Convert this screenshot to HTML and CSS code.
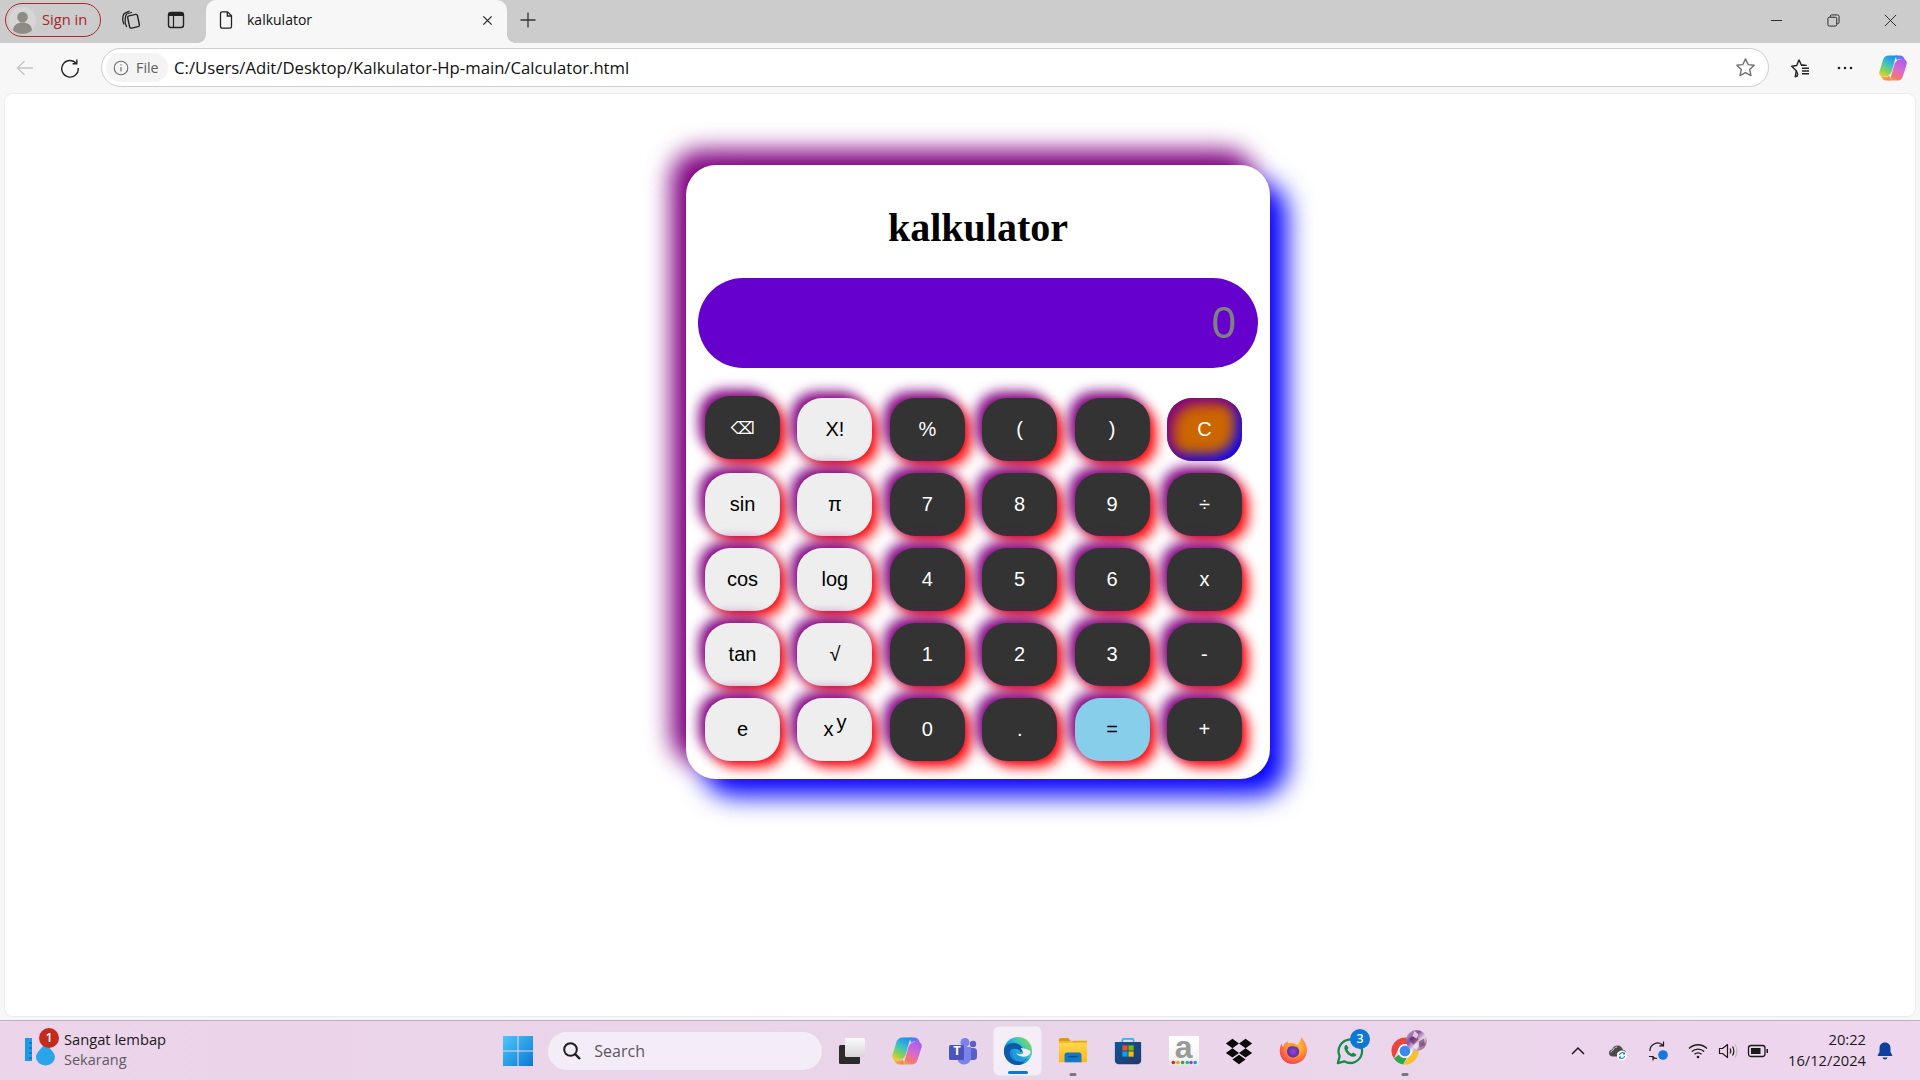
FILE: index.html
```html
<!DOCTYPE html>
<html lang="en">
<head>
<meta charset="utf-8">
<title>kalkulator</title>
<link rel="stylesheet" href="styles.css">
</head>
<body>
<svg class="defs" aria-hidden="true">
  <defs>
    <linearGradient id="copA" x1="0.7" y1="0" x2="0.2" y2="1"><stop offset="0" stop-color="#1e8ff0"/><stop offset=".45" stop-color="#3fc5c0"/><stop offset=".75" stop-color="#8ed24c"/><stop offset="1" stop-color="#f5c93a"/></linearGradient>
    <linearGradient id="copB" x1="0.3" y1="1" x2="0.8" y2="0"><stop offset="0" stop-color="#a85ff0"/><stop offset=".5" stop-color="#e06ac8"/><stop offset=".8" stop-color="#f47a6a"/><stop offset="1" stop-color="#f9a04a"/></linearGradient>
    <linearGradient id="copT" x1="0" y1="0" x2="1" y2="0.500"><stop offset="0" stop-color="#1e8ff0"/><stop offset="1" stop-color="#a85ff0"/></linearGradient>
    <linearGradient id="copU" x1="0" y1="0" x2="1" y2="0.300"><stop offset="0" stop-color="#f5c93a"/><stop offset="1" stop-color="#f9805a"/></linearGradient>
    <linearGradient id="edgeG" x1="0.9" y1="0.15" x2="0.1" y2="0.8"><stop offset="0" stop-color="#7ddc5a"/><stop offset=".35" stop-color="#35c4c8"/><stop offset=".7" stop-color="#1a8fdc"/><stop offset="1" stop-color="#0f6fc0"/></linearGradient>
    <linearGradient id="folderG" x1="0" y1="0" x2="0" y2="1"><stop offset="0" stop-color="#ffd94f"/><stop offset="1" stop-color="#fdb813"/></linearGradient>
    <linearGradient id="storeG" x1="0" y1="0" x2="1" y2="1"><stop offset="0" stop-color="#0f5596"/><stop offset="1" stop-color="#24386c"/></linearGradient>
    <radialGradient id="foxG" cx="0.6" cy="0.35" r="0.75"><stop offset="0" stop-color="#ffd23d"/><stop offset=".5" stop-color="#ff8a2e"/><stop offset="1" stop-color="#f0325f"/></radialGradient>
    <radialGradient id="foxC" cx="0.5" cy="0.5" r="0.5"><stop offset="0" stop-color="#8a4cd8"/><stop offset="1" stop-color="#5b2aa8"/></radialGradient>
    <linearGradient id="winG" x1="0" y1="0" x2="1" y2="1"><stop offset="0" stop-color="#4fc6f8"/><stop offset="1" stop-color="#0a78d4"/></linearGradient>
    <linearGradient id="tvG" x1="0" y1="0" x2="0" y2="1"><stop offset="0" stop-color="#fbfbfb"/><stop offset="1" stop-color="#d8d4d8"/></linearGradient>
    <linearGradient id="mosG" x1="0" y1="0" x2="1" y2="1"><stop offset="0" stop-color="#d8c8dc"/><stop offset=".35" stop-color="#8a4a9a"/><stop offset=".6" stop-color="#e8d8e8"/><stop offset="1" stop-color="#6a2a5c"/></linearGradient>
    <symbol id="copilot" viewBox="0 0 24 24">
      <path fill="url(#copT)" d="M14 1.200h3.800c2.200 0 3.700 1.300 4.200 3.300l.6 2.300-2.800-2c-1.200-.7-3-.6-4.500.5Z"/>
      <path fill="url(#copU)" d="M10 22.800H6.200c-2.200 0-3.700-1.300-4.200-3.300l-.6-2.300 2.800 2c1.200.7 3 .6 4.500-.5Z"/>
      <path fill="url(#copA)" d="M8.500 1.200H16.500C15 1.200 14.300 2.500 13.800 4.500L11.200 14C10.300 17.500 8 19.500 4.800 19.500H3.500C1.200 19.500-.3 17.500.3 15.300L3.500 5C4.300 2.500 6 1.200 8.500 1.200Z"/>
      <path fill="url(#copB)" transform="rotate(180 12 12)" d="M8.500 1.200H16.500C15 1.200 14.300 2.500 13.800 4.500L11.200 14C10.300 17.500 8 19.500 4.800 19.500H3.500C1.200 19.500-.3 17.500.3 15.300L3.500 5C4.300 2.500 6 1.200 8.500 1.200Z"/>
    </symbol>
  </defs>
</svg>

<header class="tabstrip">
  <div class="signin">
    <svg class="avatar" viewBox="0 0 28 28"><circle cx="14" cy="14" r="14" fill="#d6d6d6"/><circle cx="14" cy="10.500" r="5.500" fill="#8e8a86"/><path d="M4 24c1-6 5-8 10-8s9 2 10 8c-5 5-15 5-20 0Z" fill="#8e8a86"/></svg>
    <span>Sign in</span>
  </div>
  <div class="cell first">
    <svg class="ico22" viewBox="0 0 22 22" fill="none" stroke="#222" stroke-width="1.300" stroke-linecap="round"><path d="M3.800 15C2.600 12.500 2.300 9.500 3 7C3.300 5.500 4 4.700 5 4.200L9 2.300"/><path d="M6.500 17.500C5.300 15.500 4.800 12.500 5.200 9.500L5.800 6.500C6 5.500 7 4.800 8 4.500L11.500 3.500"/><rect x="8.500" y="6" width="10" height="12.500" rx="1.600" transform="rotate(-12 13.500 12)" stroke-width="1.400"/></svg>
  </div>
  <div class="cell">
    <svg class="ico20" viewBox="0 0 20 20"><rect x="2.500" y="2.500" width="15" height="15" rx="2.500" fill="none" stroke="#222" stroke-width="1.400"/><path d="M3 3h14v3H3z" fill="#222"/><path d="M7.500 6v11" stroke="#222" stroke-width="1.200"/></svg>
  </div>
  <div class="tab">
    <svg class="ico20 doc" viewBox="0 0 20 20" fill="none" stroke="#222" stroke-width="1.300"><path d="M4.500 3.500c0-1 .7-1.700 1.700-1.700h5.300l4 4v10.700c0 1-.7 1.700-1.700 1.700H6.200c-1 0-1.700-.7-1.700-1.700Z"/><path d="M11.300 2v4h4"/></svg>
    <span class="tab-title">kalkulator</span>
    <svg class="tab-x" viewBox="0 0 12 12" stroke="#222" stroke-width="1.300"><path d="M1.500 1.500l9 9M10.500 1.500l-9 9"/></svg>
  </div>
  <div class="cell newtab">
    <svg class="ico20" viewBox="0 0 20 20" stroke="#333" stroke-width="1.300"><path d="M10 2.500v15M2.500 10h15"/></svg>
  </div>
  <div class="winctl">
    <div class="wbtn"><svg class="ico13" viewBox="0 0 14 14" stroke="#222" stroke-width="1"><path d="M1 7h12"/></svg></div>
    <div class="wbtn"><svg class="ico13" viewBox="0 0 14 14" fill="none" stroke="#222" stroke-width="1"><rect x="1" y="3.500" width="9.500" height="9.500" rx="1.500"/><path d="M3.500 3.500V2.500c0-.8.6-1.500 1.500-1.500h6.500c.8 0 1.500.7 1.500 1.500V9c0 .9-.7 1.500-1.500 1.500h-1"/></svg></div>
    <div class="wbtn"><svg class="ico13" viewBox="0 0 14 14" stroke="#222" stroke-width="1"><path d="M1 1l12 12M13 1L1 13"/></svg></div>
  </div>
</header>

<nav class="toolbar">
  <div class="cell">
    <svg class="ico20" viewBox="0 0 20 20" fill="none" stroke="#c4c4c4" stroke-width="1.300"><path d="M18 10H2.500M9.500 3l-7 7 7 7"/></svg>
  </div>
  <div class="cell">
    <svg class="ico20" viewBox="0 0 20 20" fill="none" stroke="#222" stroke-width="1.400"><path d="M16.200 5.200A8.300 8.300 0 1 0 18.300 10"/><path d="M16.800 1.500v4.200h-4.200"/></svg>
  </div>
  <div class="addr">
    <div class="file-chip">
      <svg class="ico16" viewBox="0 0 16 16" fill="none" stroke="#6b6b6b" stroke-width="1.100"><circle cx="8" cy="8" r="6.800"/><path d="M8 7v4.500M8 4.300v1.200"/></svg>
      <span>File</span>
    </div>
    <span class="url">C:/Users/Adit/Desktop/Kalkulator-Hp-main/Calculator.html</span>
    <svg class="star" viewBox="0 0 20 20" fill="none" stroke="#6e6e6e" stroke-width="1.300" stroke-linejoin="round"><path d="M10 1.800l2.500 5.400 5.800.7-4.300 4 1.200 5.800L10 14.800l-5.200 2.900L6 11.900l-4.300-4 5.800-.7Z"/></svg>
  </div>
  <div class="cell">
    <svg class="ico20" viewBox="0 0 20 20" fill="none" stroke="#222" stroke-width="1.400" stroke-linejoin="round"><path d="M9 1.800l2.200 5 5 .6H11M8 17.500l-2.800 1.300 1.100-6L1.700 8.300l5-.8L9 1.800"/><path d="M6.300 12.800 8 17"/><path d="M12 10.300h7M12 13h7M12 15.700h7"/></svg>
  </div>
  <div class="cell more">
    <svg class="ico20" viewBox="0 0 20 20" fill="#222"><circle cx="4" cy="10" r="1.300"/><circle cx="10" cy="10" r="1.300"/><circle cx="16" cy="10" r="1.300"/></svg>
  </div>
  <div class="cell">
    <svg class="ico28"><use href="#copilot"/></svg>
  </div>
</nav>

<main class="page">
  <section class="card">
    <h1 class="title">kalkulator</h1>
    <div class="display">0</div>
    <div class="keys">
      <button class="key dark lift">⌫</button>
      <button class="key light">X!</button>
      <button class="key dark">%</button>
      <button class="key dark">(</button>
      <button class="key dark">)</button>
      <button class="key clear">C</button>

      <button class="key light">sin</button>
      <button class="key light">π</button>
      <button class="key dark">7</button>
      <button class="key dark">8</button>
      <button class="key dark">9</button>
      <button class="key dark">÷</button>

      <button class="key light">cos</button>
      <button class="key light">log</button>
      <button class="key dark">4</button>
      <button class="key dark">5</button>
      <button class="key dark">6</button>
      <button class="key dark">x</button>

      <button class="key light">tan</button>
      <button class="key light">√</button>
      <button class="key dark">1</button>
      <button class="key dark">2</button>
      <button class="key dark">3</button>
      <button class="key dark">-</button>

      <button class="key light">e</button>
      <button class="key light">x<sup>y</sup></button>
      <button class="key dark">0</button>
      <button class="key dark">.</button>
      <button class="key equals">=</button>
      <button class="key dark">+</button>
    </div>
  </section>
</main>

<footer class="taskbar">
  <div class="widget">
    <div class="widget-icon">
      <svg class="ico-weather" viewBox="0 0 32 32"><rect x="1" y="0" width="7" height="23" fill="#1c9ae8"/><path d="M5 5h3M5 10h3M5 15h3M5 20h3" stroke="#0a5ba8" stroke-width="1"/><path d="M21.500 5c3 5 9.500 9 9.500 14a9.500 8.500 0 0 1-19 0c0-5 6.500-9 9.500-14Z" fill="#2aa5ea"/></svg>
      <span class="badge red">1</span>
    </div>
    <div class="widget-text">
      <span class="w-main">Sangat lembap</span>
      <span class="w-sub">Sekarang</span>
    </div>
  </div>

  <div class="tb">
    <svg class="ico30" viewBox="0 0 30 30"><path fill="url(#winG)" d="M0 0h14.500v14.500H0zM15.500 0H30v14.500H15.500zM0 15.500h14.500V30H0zM15.500 15.500H30V30H15.500z"/></svg>
  </div>
  <div class="search">
    <svg class="ico20" viewBox="0 0 20 20" fill="none" stroke="#1c1c1c" stroke-width="2"><circle cx="8.500" cy="8.500" r="6.300"/><path d="M13 13l5 5" stroke-width="2.400"/></svg>
    <span>Search</span>
  </div>

  <div class="tb">
    <svg class="ico30" viewBox="0 0 30 30"><rect x="2" y="9" width="21" height="19" rx="1.500" fill="#2b2b2b"/><rect x="8" y="2" width="20" height="19" rx="1.500" fill="url(#tvG)"/></svg>
  </div>
  <div class="tb"><svg class="ico32"><use href="#copilot"/></svg></div>
  <div class="tb">
    <svg class="ico30" viewBox="0 0 30 30"><circle cx="25" cy="8" r="3.200" fill="#5b5fc7"/><rect x="20" y="12" width="9" height="12" rx="3.500" fill="#5b5fc7"/><circle cx="17" cy="6.500" r="4.500" fill="#7b83eb"/><path d="M10 11h13v11a7 7 0 0 1-13 3Z" fill="#7b83eb"/><rect x="1" y="9" width="15" height="15" rx="1.500" fill="#4b53bc"/></svg>
    <span class="teams-t">T</span>
  </div>
  <div class="tb active">
    <svg class="ico32" viewBox="0 0 32 32"><circle cx="16" cy="16" r="15" fill="url(#edgeG)"/><path d="M1 16c0-5 5-8.500 10-8.500 6 0 10 3.500 10 7 0 1.500-1 2.500-2.500 2.500 0-2-3-3.500-6.500-3.500-4.500 0-5.500 3.500-4.500 7 1 4 4.500 6.500 9 6.500 4 0 6.500-1 8.800-3.500C23.500 27.500 20 31 16 31 7 31 1 24 1 16Z" fill="#0f5aa8"/><path d="M19 13c4 0 9 1.500 10.500 3.500 0 2.500-3 5.500-7.500 5.500-4 0-7-1.500-8-3.500 4 2 8 1 7.500-1.500-.3-1.700-2.500-3-2.500-4Z" fill="#f4ecf8"/><path d="M12 15c-2 2-2.200 5-.5 8 2 3 5 5 10 4.500 3-.5 5-1.500 6.500-3.500-3 2-9 3-12.500 0-2.500-2.500-3-5.500-3.500-9Z" fill="#1da0e0"/></svg>
    <i class="pip blue"></i>
  </div>
  <div class="tb">
    <svg class="ico32" viewBox="0 0 32 32"><path d="M1 4c0-1 .7-2 2-2h8l3 4h-13Z" fill="#d99b0b"/><path d="M1 6h30v22H1Z" fill="url(#folderG)"/><path d="M1 6h13l3-1h14v2H1Z" fill="#e8a80f"/><path d="M7 20c0-1.500 1-2.500 2.500-2.500h13c1.500 0 2.500 1 2.500 2.500v8H7Z" fill="#1478c8"/><path d="M11 22h10" stroke="#0a4f8f" stroke-width="1.500"/></svg>
    <i class="pip grey"></i>
  </div>
  <div class="tb">
    <svg class="ico32" viewBox="0 0 32 32"><path d="M10 8V4.500c0-1 .6-1.500 1.500-1.500h9c.9 0 1.500.5 1.500 1.500V8" fill="none" stroke="#2ab7ee" stroke-width="1.800"/><path d="M2 6.500h28v20c0 2-1.500 3.500-3.500 3.500h-21C3.500 30 2 28.500 2 26.500Z" fill="url(#storeG)"/><rect x="10" y="10" width="5.500" height="5.500" fill="#f25022"/><rect x="16.500" y="10" width="5.500" height="5.500" fill="#7fba00"/><rect x="10" y="16.500" width="5.500" height="5.500" fill="#00a4ef"/><rect x="16.500" y="16.500" width="5.500" height="5.500" fill="#ffb900"/></svg>
  </div>
  <div class="tb">
    <div class="amz">
      <span class="amz-a">a</span>
      <svg class="amz-dots" viewBox="0 0 30 5"><circle cx="3.500" cy="2.500" r="1.900" fill="#f0141e"/><circle cx="8.500" cy="2.500" r="1.900" fill="#ff9a1a"/><circle cx="13.500" cy="2.500" r="1.900" fill="#22a45a"/><circle cx="18.500" cy="2.500" r="1.900" fill="#2bb573"/><circle cx="22.500" cy="2.500" r="1.900" fill="#8e44d8"/><circle cx="27" cy="2.500" r="1.900" fill="#1f8fe8"/></svg>
    </div>
  </div>
  <div class="tb">
    <svg class="ico32" viewBox="0 0 32 32" fill="#0a0a0a"><path d="M9 3l7 5-7 5-7-5ZM23 3l7 5-7 5-7-5ZM9 13l7 5-7 5-7-5ZM23 13l7 5-7 5-7-5ZM16 20l7 5-7 5-7-5Z"/></svg>
  </div>
  <div class="tb">
    <svg class="ico32" viewBox="0 0 32 32"><path d="M24 1c1 3 4 5 5 9 2 7 0 13-5 17-6 4-15 4-20-2C0 20 0 13 3 8c0 2 .5 3 1.500 4 .5-3 2-5 5-6.500-.5 1.500 0 2.500 1.500 3 3-1 6-.5 8 1 3-2.500 5-5 5-8.500Z" fill="url(#foxG)"/><circle cx="15" cy="16.500" r="6.500" fill="url(#foxC)"/><path d="M6 10c3-3 7-3 10-2 3 1 5 3 6 6-3-3-6-3.500-9-3-3 .5-5 1-7-1Z" fill="#ff9a2a"/></svg>
  </div>
  <div class="tb">
    <svg class="ico32" viewBox="0 0 32 32" fill="none"><path d="M3 29l2-7.500A12.500 12.500 0 1 1 10 27Z" stroke="#128c4e" stroke-width="2.400" stroke-linejoin="round"/><path d="M11.500 9.500c-1.500 1-2 3-1 5.500 1.500 3.500 4 6 7.500 7 2.500.5 4.300-.5 5-2l-3.500-2.500-1.800 1.500c-2-.7-3.500-2.500-4.500-4.500l1.300-1.700-2-3.300Z" fill="#128c4e"/></svg>
    <span class="badge blue">3</span>
  </div>
  <div class="tb">
    <svg class="ico32" viewBox="0 0 32 32"><path d="M1.500 16A14.500 14.500 0 0 1 28.500 8.700L16 8.700a7.300 7.300 0 0 0-7 5L4.200 24A14.500 14.500 0 0 1 1.500 16Z" fill="#e8453c"/><path d="M4.200 24 9.500 19.800A7.300 7.300 0 0 0 18 23l-4 7.400A14.500 14.500 0 0 1 4.200 24Z" fill="#2fa650"/><path d="M28.500 8.700A14.500 14.500 0 0 1 14 30.400L21 21a7.300 7.300 0 0 0 .5-12.300Z" fill="#f9c02e"/><circle cx="16" cy="16" r="7.400" fill="#fff"/><circle cx="16" cy="16" r="5.800" fill="#3f87f0"/></svg>
    <svg class="mosaic" viewBox="0 0 20 20"><circle cx="10" cy="10" r="10" fill="url(#mosG)"/><path d="M3 8l6-4 3 5-5 5ZM12 11l5-3 1 6-5 3Z" fill="#5a1f5a" opacity=".55"/><path d="M8 1l4 3-2 4-4-2ZM9 13l3 2-2 4-3-3Z" fill="#f1e4ee" opacity=".8"/></svg>
    <i class="pip grey"></i>
  </div>

  <div class="tray">
    <div class="tr w40"><svg class="ico16" viewBox="0 0 16 16" fill="none" stroke="#1a1a1a" stroke-width="1.500"><path d="M2 11l6-6 6 6"/></svg></div>
    <div class="tr w40"><svg class="ico20" viewBox="0 0 20 20"><path d="M5 15.500C2.500 15.500 1 14 1 12c0-2 1.500-3.300 3.200-3.400C5 6 7 4.500 9.500 4.500c2.800 0 4.800 1.800 5.300 4.300 1.300 0 3 1 3.200 3H9v3.700Z" fill="#4a4a4a"/><path d="M3 11.500c0-1.500 1-2 2-2.200.5-2 2.200-3.300 4.300-3.300" fill="none" stroke="#eee" stroke-width=".8"/><circle cx="14" cy="14.500" r="5" fill="#fff"/><path d="M11.500 14a2.700 2.700 0 0 1 4.700-1.500M16.500 15a2.700 2.700 0 0 1-4.700 1.500M16.500 11.500V13H15M11.500 17.500V16H13" fill="none" stroke="#1478d8" stroke-width="1.100"/></svg></div>
    <div class="tr w40"><svg class="ico22" viewBox="0 0 22 22" fill="none" stroke="#1a1a1a" stroke-width="1.200"><path d="M3 11A7.500 7.500 0 0 1 16 5.500M16.500 1.500v4.300h-4.300"/><path d="M10 18.500a7 7 0 0 1-4.500-1.800M2 16.500h4v4"/><circle cx="16" cy="15" r="4.800" fill="#1478e0" stroke="none"/></svg></div>
    <div class="tr w40"><svg class="ico20" viewBox="0 0 20 20" fill="none" stroke="#1a1a1a" stroke-width="1.300"><path d="M1 7.500c5-5 13-5 18 0M3.800 10.500c3.500-3.300 9-3.300 12.400 0M6.500 13.300c2-1.800 5-1.800 7 0"/><circle cx="10" cy="16" r="1.300" fill="#1a1a1a" stroke="none"/></svg></div>
    <div class="tr w20"><svg class="ico20" viewBox="0 0 20 20" fill="none" stroke="#1a1a1a" stroke-width="1.200"><path d="M1.500 7.500v5h3l5 4v-13l-5 4Z" stroke-linejoin="round"/><path d="M12 7.500c1 1.500 1 3.500 0 5M14.500 5.500c1.800 2.500 1.800 6.500 0 9"/><path d="M17 3.500c2.500 3.500 2.500 9.500 0 13" stroke="#bbb"/></svg></div>
    <div class="tr w40"><svg class="ico22" viewBox="0 0 22 22"><rect x="1.500" y="5.500" width="16.500" height="11" rx="2.500" fill="none" stroke="#1a1a1a" stroke-width="1.300"/><rect x="4" y="8" width="9.500" height="6" fill="#1a1a1a"/><path d="M19.500 9h1.500v4h-1.500z" fill="#1a1a1a"/></svg></div>
    <div class="clock"><span>20:22</span><span>16/12/2024</span></div>
    <div class="tr bell"><svg class="ico20" viewBox="0 0 20 20"><path d="M10 1.500c-3.500 0-5.500 2.500-5.500 6v3.500L2.800 14c-.3.500 0 1 .5 1h13.400c.5 0 .8-.5.500-1l-1.700-3V7.500c0-3.500-2-6-5.500-6Z" fill="#0f3f9c"/><path d="M7.500 16.500c.3 1.300 1.200 2 2.500 2s2.200-.7 2.500-2Z" fill="#0f3f9c"/></svg></div>
  </div>
</footer>
</body>
</html>
```

FILE: styles.css
```css
* { box-sizing: border-box; }

html, body { margin: 0; height: 100%; }

body {
  height: 100vh;
  display: flex;
  flex-direction: column;
  overflow: hidden;
  background: #f7f7f7;
  font-family: "Open Sans", "Liberation Sans", sans-serif;
  color: #111;
}

.defs { width: 0; height: 0; position: absolute; }

svg { display: block; flex: none; }
.ico13 { width: 13px; height: 13px; }
.ico16 { width: 16px; height: 16px; }
.ico20 { width: 20px; height: 20px; }
.ico22 { width: 22px; height: 22px; }
.ico28 { width: 28px; height: 28px; }
.ico30 { width: 30px; height: 30px; }
.ico32 { width: 30px; height: 30px; }

/* ---------- tab strip ---------- */
.tabstrip {
  height: 43px;
  flex: none;
  display: flex;
  align-items: center;
  background: #cccccc;
}

.signin {
  margin-left: 5px;
  width: 96px;
  height: 34px;
  margin-top: -3px;
  display: flex;
  align-items: center;
  gap: 6px;
  padding-left: 3px;
  border: 1.5px solid #b3262e;
  border-radius: 17px;
  color: #a8262e;
  font-size: 14.7px;
}

.signin span { margin-top: -2px; }

.avatar { width: 27px; height: 27px; }

.cell {
  width: 45px;
  height: 38px;
  flex: none;
  display: flex;
  align-items: center;
  justify-content: center;
}

.tabstrip .cell { margin-top: -3px; }
.cell.first { margin-left: 7px; }

.tab {
  position: relative;
  align-self: flex-end;
  margin-left: 8px;
  width: 301px;
  height: 43px;
  display: flex;
  align-items: center;
  padding: 0 14px 3px 9px;
  background: #f7f7f7;
  border-radius: 10px 10px 0 0;
}

.tab::before,
.tab::after {
  content: "";
  position: absolute;
  bottom: 0;
  width: 8px;
  height: 8px;
}
.tab::before { left: -8px; background: radial-gradient(circle at 0 0, #cccccc 7.5px, #f7f7f7 8px); }
.tab::after { right: -8px; background: radial-gradient(circle at 100% 0, #cccccc 7.5px, #f7f7f7 8px); }

.doc { margin-left: 1px; }
.tab-title { margin: -2px 0 0 11px; font-size: 14px; flex: 1; }
.tab-x { width: 11px; height: 11px; }

.cell.newtab { margin-left: -2px; }

.winctl { margin-left: auto; margin-right: 1px; display: flex; margin-top: -3px; }
.wbtn { width: 57px; height: 38px; display: flex; align-items: center; justify-content: center; }

/* ---------- toolbar ---------- */
.toolbar {
  height: 51px;
  flex: none;
  display: flex;
  align-items: center;
  padding: 0 5px 2px 2px;
}

.addr {
  flex: 1;
  height: 39px;
  margin: 0 8px 0 9px;
  display: flex;
  align-items: center;
  padding: 0 12px 0 4px;
  background: #fff;
  border: 1px solid #cfcfcf;
  border-radius: 20px;
}

.file-chip {
  height: 29px;
  width: 62px;
  display: flex;
  align-items: center;
  gap: 7px;
  padding-left: 7px;
  background: #f4f4f4;
  border-radius: 15px;
  font-size: 14.3px;
  color: #5f5f5f;
}

.url { margin-left: 6px; flex: 1; font-size: 16.7px; color: #111; }
.star { width: 21px; height: 21px; }

.cell.more { margin-right: 3px; }

/* ---------- page ---------- */
.page {
  flex: none;
  height: 922px;
  margin: 0 5px;
  background: #fff;
  border-radius: 8px;
  box-shadow: 0 0 0 1px #ececec;
}

.card {
  width: 584px;
  height: 614px;
  margin-left: 681px;
  position: relative;
  top: 71px;
  padding: 0 12px;
  background: #fff;
  border-radius: 30px;
  box-shadow: -15px -15px 25px #800080, 17px 17px 26px #0000ff;
}

.title {
  margin: 0;
  height: 113px;
  padding-top: 39px;
  text-align: center;
  font: bold 40px/1.2 "Liberation Serif", serif;
  color: #000;
}

.display {
  width: 560px;
  height: 90px;
  padding-right: 22px;
  background: #6600cc;
  border-radius: 45px;
  color: #808080;
  font: 44px/90px "Liberation Sans", sans-serif;
  text-align: right;
}

.keys {
  margin: 30px 0 0 7px;
  display: grid;
  grid-template-columns: repeat(6, 75px);
  grid-auto-rows: 63px;
  column-gap: 17.4px;
  row-gap: 12px;
}

.key {
  padding: 0;
  border: 0;
  border-radius: 25px;
  font: 20px "Liberation Sans", "DejaVu Sans", sans-serif;
  box-shadow: -6px -6px 13px #800080, 6px 6px 13px #ff0000;
}

.key sup { font-size: 20px; line-height: 0; vertical-align: 7px; margin-left: 3px; }

.key.dark { background: #333333; color: #fff; }
.key.light { background: #eeeeee; color: #000; }
.key.equals { background: #87ceeb; color: #000; }
.key.lift { margin: -2px 0 2px; font-size: 17px; padding-top: 2px; }
.key.clear {
  background: #cc6600;
  color: #fff;
  box-shadow: inset 6px 6px 13px #800080, inset -6px -6px 13px #0000ff;
}

/* ---------- taskbar ---------- */
.taskbar {
  margin-top: 4px;
  height: 60px;
  flex: none;
  display: flex;
  align-items: center;
  background: linear-gradient(90deg, #ecd4ea 0%, #e9d5e9 50%, #eed6ee 100%);
  border-top: 1px solid #bfb0bf;
}

.widget {
  width: 490px;
  flex: none;
  display: flex;
  align-items: center;
  padding-left: 24px;
}

.widget-icon { position: relative; width: 32px; height: 38px; display: flex; align-items: flex-end; }
.ico-weather { width: 32px; height: 32px; }

.badge {
  position: absolute;
  width: 20px;
  height: 20px;
  border-radius: 50%;
  color: #fff;
  font-size: 12.5px;
  font-weight: 600;
  line-height: 20px;
  text-align: center;
}
.badge.red { top: -4px; left: 15px; background: #c42b1c; }
.badge.blue { top: 2px; left: 28px; background: #0a78d4; }

.widget-text { margin-left: 8px; display: flex; flex-direction: column; gap: 3px; margin-top: -3px; }
.w-main { font-size: 14.7px; line-height: 18px; color: #1a1a1a; }
.w-sub { font-size: 14.5px; line-height: 18px; color: #5e5a60; }

.tb {
  position: relative;
  width: 55.3px;
  height: 48px;
  flex: none;
  display: flex;
  align-items: center;
  justify-content: center;
}

.tb.active::before {
  content: "";
  position: absolute;
  left: 4px;
  right: 4px;
  top: 0;
  bottom: 0;
  background: #f5edf8;
  border-radius: 5px;
  box-shadow: 0 0 0 1px #ece2ee;
}
.tb.active svg { position: relative; }

.pip {
  position: absolute;
  left: 50%;
  transform: translateX(-50%);
  height: 3px;
  border-radius: 2px;
}
.pip.blue { width: 20px; background: #0a78d4; bottom: 1px; }
.pip.grey { width: 7px; background: #7c7480; bottom: -1px; }

.search {
  margin: 0 2px 0 3px;
  width: 274px;
  height: 38px;
  flex: none;
  display: flex;
  align-items: center;
  gap: 12px;
  padding-left: 14px;
  background: #f4edf7;
  border-radius: 19px;
  box-shadow: 0 0 0 1px #e4d8e6;
  font-size: 16px;
  color: #5c5560;
}

.teams-t {
  position: absolute;
  left: 15px;
  top: 14px;
  width: 14px;
  text-align: center;
  font-size: 13px;
  font-weight: 700;
  color: #fff;
}

.amz {
  width: 30px;
  height: 30px;
  display: flex;
  flex-direction: column;
  align-items: center;
  background: linear-gradient(#fff, #f6f6f6 70%, #e2e2e2);
}
.amz-a { height: 24px; font: bold 32px/22px "Liberation Sans", sans-serif; color: #9a9a9a; }
.amz-dots { width: 28px; height: 5px; }

.mosaic { position: absolute; top: 3px; left: 29px; width: 21px; height: 21px; }

.tray { margin-left: auto; display: flex; align-items: center; }
.tr { height: 40px; display: flex; align-items: center; justify-content: center; }
.w40 { width: 40px; }
.w20 { width: 20px; }

.clock {
  width: 88px;
  display: flex;
  flex-direction: column;
  align-items: flex-end;
  gap: 3px;
  margin-top: -3px;
  font-size: 14.7px;
  line-height: 18px;
  color: #1a1a1a;
}

.bell { width: 38px; margin-right: 16px; }
```
